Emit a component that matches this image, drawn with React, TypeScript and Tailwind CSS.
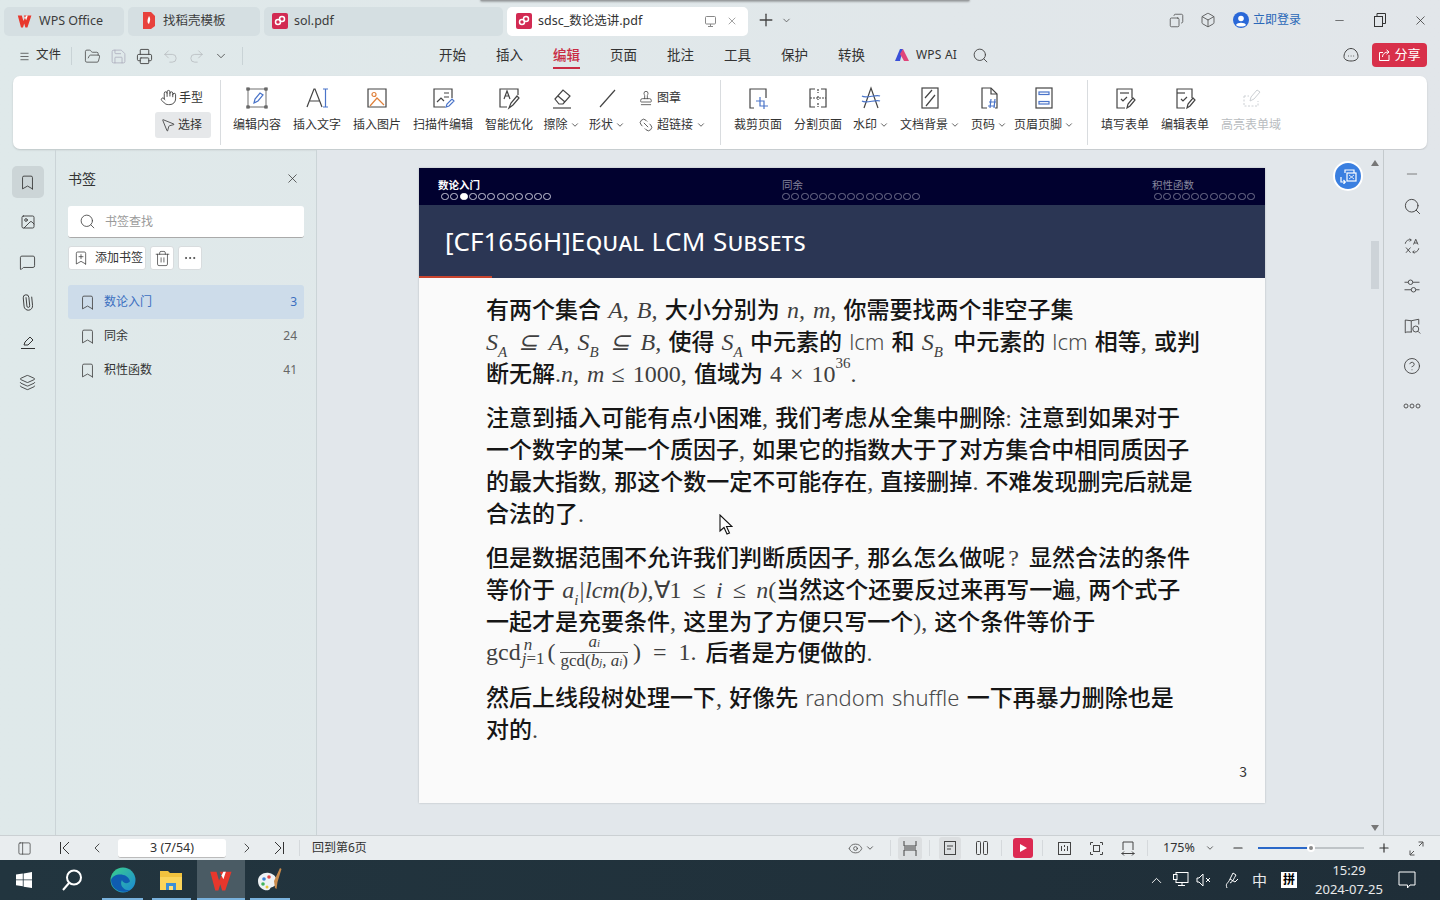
import React from "react";
import { ChevronDown, ChevronLeft, ChevronRight, ChevronUp, X, Plus, Minus, Search, Undo2, Redo2, Printer, FolderOpen, Save, Bookmark, MessageSquare, Paperclip, Layers, Ellipsis, Trash2, BookmarkPlus, Eye, CircleHelp, Hand, MousePointer2, Link2, Stamp, Box, Copy, PanelLeft, Menu, Image as ImageIcon } from "lucide-react";

const CJK = "font-['Noto_Sans','Noto_Sans_CJK_SC',sans-serif]";

function S({ s = 24, children, className = "" }: { s?: number; children: React.ReactNode; className?: string }) {
  return (
    <svg width={s} height={s} viewBox="0 0 24 24" fill="none" stroke="#444" strokeWidth="1.2" className={className}>
      {children}
    </svg>
  );
}

const Caret = () => <ChevronDown size={10} strokeWidth={2.2} color="#555" />;

function WpsLogo({ s = 16 }: { s?: number }) {
  return (
    <svg width={s} height={s} viewBox="0 0 20 20">
      <path d="M1 3h5l2 7 2-4-1.500-3h9.500l-5 15h-2.500l-1.500-5-1.500 5h-2.500z" fill="#e8372c" />
      <path d="M10 6l1.500-3h2l-2 6z" fill="#fff" />
    </svg>
  );
}

function PdfIcon() {
  return (
    <svg width="16" height="16" viewBox="0 0 16 16">
      <rect x="0" y="0" width="16" height="16" rx="2" fill="#d22a52" />
      <circle cx="6" cy="9" r="2.500" fill="none" stroke="#fff" strokeWidth="1.500" />
      <circle cx="10" cy="6" r="2.500" fill="none" stroke="#fff" strokeWidth="1.500" />
    </svg>
  );
}

function Tab({ w, pl, icon, label, active, children }: { w: string; pl: string; icon: React.ReactNode; label: string; active?: boolean; children?: React.ReactNode }) {
  return (
    <div className={`${w} ${pl} h-[29px] rounded-[5px] flex items-center pb-[1px] text-[12.500px] ${active ? "bg-white text-[#333]" : "bg-[#d5dfe2] text-[#3c3c3c]"}`}>
      <div className="w-[16px] mr-[6px] flex justify-center">{icon}</div>
      <span className="whitespace-nowrap">{label}</span>
      {children}
    </div>
  );
}

function TopBar() {
  return (
    <div className="h-[40px] flex items-start pt-[7px] pl-[4px] gap-[4px] shrink-0">
      <Tab w="w-[120px]" pl="pl-[13px]" icon={<WpsLogo />} label="WPS Office" />
      <Tab w="w-[132px]" pl="pl-[13px]" icon={
        <svg width="14" height="18" viewBox="0 0 14 18"><path d="M1 0h8l4 4v10l-4 3H1z" fill="#e8413c" /><path d="M7 4c2 3 1 5 0 8-2-1-2-4 0-8z" fill="#fff" /></svg>
      } label="找稻壳模板" />
      <Tab w="w-[239px]" pl="pl-[8px]" icon={<PdfIcon />} label="sol.pdf" />
      <Tab w="w-[241px]" pl="pl-[9px]" icon={<PdfIcon />} label="sdsc_数论选讲.pdf" active>
        <div className="ml-auto flex items-center gap-[9px] pr-[10px]">
          <svg width="13" height="13" viewBox="0 0 13 13" fill="none" stroke="#888"><rect x="1.500" y="1.500" width="10" height="7.500" rx="1" /><path d="M4 11.500h5M6.500 9v2" /></svg>
          <X size={12} strokeWidth={1.2} color="#666" />
        </div>
      </Tab>
      <div className="flex items-center h-[26px] ml-[4px] gap-[3px]">
        <Plus size={20} strokeWidth={1.6} color="#444" />
        <ChevronDown size={11} strokeWidth={1.8} color="#555" className="ml-[2px]" />
      </div>
      <div className="ml-auto h-[26px] flex items-center pr-[12px]">
        <Copy size={15} strokeWidth={1.2} color="#444" className="mr-[16px] -scale-x-100" />
        <Box size={16} strokeWidth={1.2} color="#444" className="mr-[17px]" />
        <svg width="16" height="16" viewBox="0 0 16 16" className="mr-[4px]">
          <circle cx="8" cy="8" r="8" fill="#2a68d8" />
          <circle cx="8" cy="6.500" r="2.800" fill="#fff" />
          <path d="M3 13c1-3 9-3 10 0-2 2-8 2-10 0z" fill="#fff" />
        </svg>
        <span className="text-[12px] text-[#2a68b8] w-[48px] mr-[32px] whitespace-nowrap">立即登录</span>
        <Minus size={13} strokeWidth={1.2} color="#333" className="mr-[28px]" />
        <svg width="12" height="14" viewBox="0 0 12 14" fill="none" stroke="#333" className="mr-[27px]"><rect x="0.500" y="3.500" width="8" height="10" /><path d="M3 3V0.500h8.500v10H9" /></svg>
        <X size={15} strokeWidth={1.2} color="#333" />
      </div>
    </div>
  );
}

const MENU = ["开始", "插入", "编辑", "页面", "批注", "工具", "保护", "转换"];

function MenuBar() {
  return (
    <div className="h-[32px] flex items-center shrink-0 relative text-[13.500px] text-[#333]">
      <div className="w-[72px] flex items-center pl-[19px] border-r border-[#c9d3d6] h-[18px]">
        <Menu size={11} strokeWidth={1.5} color="#333" className="mr-[6px]" />
        <span className="text-[12.500px] pb-[1px]">文件</span>
      </div>
      <div className="flex items-center ml-[12px] gap-[9px] w-[159px] h-[18px] border-r border-[#c9d3d6]">
        <FolderOpen size={17} strokeWidth={1.1} color="#444" />
        <Save size={17} strokeWidth={1.1} color="#aab" />
        <Printer size={17} strokeWidth={1.3} color="#444" />
        <Undo2 size={17} strokeWidth={1.1} color="#b5b9bd" />
        <Redo2 size={17} strokeWidth={1.1} color="#b5b9bd" />
        <ChevronDown size={14} strokeWidth={1.4} color="#444" />
      </div>
      <div className="flex items-center ml-[196px] gap-[30px] h-full">
        {MENU.map((m) => (
          <div key={m} className={`relative h-full flex items-center pb-[2px] ${m === "编辑" ? "text-[#c92c44] font-medium" : ""}`}>
            {m}
            {m === "编辑" && <div className="absolute left-0 right-0 bottom-[3px] h-[2px] bg-[#c92c44]" />}
          </div>
        ))}
      </div>
      <svg width="14" height="12" viewBox="0 0 14 12" className="ml-[30px] mr-[7px] mb-[2px]">
        <path d="M0 12L5 0h3L5 12z" fill="#3a50d8" />
        <path d="M5 5l3-5 6 12H9z" fill="#e0457a" />
      </svg>
      <span className="text-[12px] w-[42px] whitespace-nowrap tracking-[0.2px] pb-[2px]">WPS AI</span>
      <Search size={17} strokeWidth={1.3} color="#444" className="ml-[14px] mb-[2px]" />
      <div className="ml-auto flex items-center pr-[13px] pb-[2px]">
        <svg width="18" height="18" viewBox="0 0 18 18" fill="none" stroke="#444" className="mr-[12px]">
          <path d="M9 2.500c4 0 7 4 7 8 0 3-3 4.500-7 4.500s-7-1.500-7-4.500c0-4 3-8 7-8z" />
          <path d="M6 10h.8M8.700 10h.8M11.300 10h.8" />
        </svg>
        <div className="w-[55px] h-[24px] rounded-[4px] bg-[#d8304a] flex items-center justify-center text-white text-[13px] gap-[3px]">
          <svg width="13" height="13" viewBox="0 0 13 13" fill="none" stroke="#fff"><path d="M11 6v5.500H1.500V3.500H5" /><path d="M4.500 8c0-3 2.500-5 6-5M8.500 0.800l2.500 2.200-2.500 2.200" /></svg>
          分享
        </div>
      </div>
    </div>
  );
}

function RI({ w = "w-[48px]", icon, label, caret, dim }: { w?: string; icon: React.ReactNode; label: string; caret?: boolean; dim?: boolean }) {
  return (
    <div className={`${w} flex flex-col items-center shrink-0`}>
      <div className="h-[28px] flex items-center justify-center">{icon}</div>
      <div className={`mt-[4px] h-[18px] flex items-center whitespace-nowrap text-[12px] gap-[2px] ${dim ? "text-[#b8bcc0]" : "text-[#333]"}`}>
        {label}
        {caret && <Caret />}
      </div>
    </div>
  );
}

const blue = "#4a74c9";

function Ribbon() {
  return (
    <div className="mx-[13px] h-[73px] mt-[4px] w-[1414px] bg-white rounded-[7px] flex pt-[8px] pl-[142px] shrink-0 shadow-[0_1px_2px_rgba(0,0,0,0.15)]">
      <div className="w-[65px] flex flex-col text-[12px] text-[#333]">
        <div className="h-[27px] flex items-center pl-[5px] gap-[2px]">
          <Hand size={17} strokeWidth={1.2} color="#333" />手型
        </div>
        <div className="mt-[1px] w-[56px] h-[26px] rounded-[3px] bg-[#e6e8ea] flex items-center pl-[5px] gap-[2px]">
          <MousePointer2 size={16} strokeWidth={1.2} color="#333" />选择
        </div>
      </div>
      <div className="w-px h-[65px] -mt-[4px] bg-[#d9dcdf] mr-[12px]" />
      <div className="flex gap-[12px]">
        <RI label="编辑内容" icon={<S><rect x="3" y="3" width="18" height="18" stroke="#888" /><path d="M9 17l1-4 5-6 3 2-5 6z" stroke={blue} /><path d="M2 2h2v2H2zM20 2h2v2h-2zM2 20h2v2H2zM20 20h2v2h-2z" fill="#fff" /></S>} />
        <RI label="插入文字" icon={<S><path d="M2 21L9 3h1l7 18M5 15h10" /><path d="M18 3h5M20.500 3v18M18 21h5" stroke={blue} /></S>} />
        <RI label="插入图片" icon={<S><path d="M3 3h18v18H3z" /><circle cx="9" cy="8.500" r="2" stroke="#e0803a" /><path d="M5 20l7-8 7 7" stroke="#e0803a" /></S>} />
        <RI w="w-[60px]" label="扫描件编辑" icon={<S><path d="M21 12V3H3v18h11" /><path d="M13 7h5M13 11h5" /><path d="M6 16l4-4 3 3" /><path d="M15 21l1-3 5-5 2 2-5 5z" stroke={blue} /></S>} />
        <RI label="智能优化" icon={<S><path d="M21 9V3H3v18h7" /><path d="M7 13l3-8 3 8M8 10h4" /><path d="M12 22l2-5 6-7 2 2-6 7z" /></S>} />
        <RI w="w-[33px]" label="擦除" caret icon={<S><path d="M5 13l8-9 7 6-7 8H9z" /><path d="M8 10l7 6" /><path d="M3 22h18" /></S>} />
        <RI w="w-[34px]" label="形状" caret icon={<S><path d="M5 21L20 4" /></S>} />
        <div className="w-[68px] flex flex-col text-[12px] text-[#333] shrink-0 ml-[2px]">
          <div className="h-[28px] flex items-center gap-[3px]"><Stamp size={16} strokeWidth={1.2} color="#444" />图章</div>
          <div className="mt-[4px] h-[18px] flex items-center gap-[3px] whitespace-nowrap"><Link2 size={16} strokeWidth={1.2} color="#444" className="rotate-45" />超链接<Caret /></div>
        </div>
      </div>
      <div className="w-px h-[65px] -mt-[4px] bg-[#d9dcdf] ml-[14px] mr-[13px]" />
      <div className="flex gap-[12px]">
        <RI label="裁剪页面" icon={<S><path d="M8 22H4V3h16v9" /><path d="M14 11v9h8M10 15h8v8" stroke={blue} /></S>} />
        <RI label="分割页面" icon={<S><path d="M9 3H4v18h5M15 3h5v18h-5" /><path d="M4 12h16M12 3v4M12 10v4M12 17v4" strokeDasharray="2 1" /></S>} />
        <RI w="w-[34px]" label="水印" caret icon={<S><path d="M5 22l7-20 7 20" /><path d="M3 10c4 3 14-2 18 0M3 15c4 3 14-2 18 0" stroke={blue} /></S>} />
        <RI w="w-[60px]" label="文档背景" caret icon={<S><rect x="4" y="2" width="16" height="20" /><path d="M7 12l7-8M8 20l9-11" /></S>} />
        <RI w="w-[34px]" label="页码" caret icon={<S><path d="M10 22H5V2h9l6 6v14h-2" /><path d="M14 2v6h6" /><path d="M12 16h7M11 20h7M14 13l-1 9M18 13l-1 9" stroke={blue} /></S>} />
        <RI w="w-[52px]" label="页眉页脚" caret icon={<S><rect x="4" y="2" width="16" height="20" /><rect x="7" y="6" width="10" height="2.500" stroke={blue} /><rect x="7" y="15.500" width="10" height="2.500" stroke={blue} /></S>} />
      </div>
      <div className="w-px h-[65px] -mt-[4px] bg-[#d9dcdf] ml-[17px] mr-[13px]" />
      <div className="flex gap-[12px]">
        <RI label="填写表单" icon={<S><path d="M12 22H4V3h15v9" /><path d="M7 7h9" /><path d="M8 13l2 2 4-4" /><path d="M14 22l1-4 5-6 2 2-5 6z" /></S>} />
        <RI label="编辑表单" icon={<S><path d="M12 22H4V3h15v9" /><path d="M4 7h8" /><path d="M8 13l2 2 4-4" /><path d="M14 22l1-4 5-6 2 2-5 6z" /></S>} />
        <RI w="w-[60px]" dim label="高亮表单域" icon={<svg width="24" height="24" viewBox="0 0 24 24" fill="none" stroke="#ccd0d4"><path d="M5 10h5M5 10v10h14v-5" strokeDasharray="2 1.500" /><path d="M11 15l1-4 6-7 3 2-6 7z" /></svg>} />
      </div>
    </div>
  );
}

function LeftRail() {
  const icons = [
    <Bookmark key="a" size={17} strokeWidth={1.2} color="#333" />,
    <ImageIcon key="b" size={16} strokeWidth={1.3} color="#333" />,
    <MessageSquare key="c" size={17} strokeWidth={1.2} color="#333" />,
    <Paperclip key="d" size={17} strokeWidth={1.2} color="#333" className="rotate-[-50deg]" />,
    <svg key="e" width="16" height="16" viewBox="0 0 16 16" fill="none" stroke="#333"><path d="M4 11l1-3 5-5 3 3-5 5zM1 14.500h14" /></svg>,
    <Layers key="f" size={17} strokeWidth={1.2} color="#333" />,
  ];
  return (
    <div className="w-[56px] shrink-0 border-r border-[#cbd4d7] flex flex-col items-center pt-[16px] gap-[8px]">
      {icons.map((ic, i) => (
        <div key={i} className={`w-[32px] h-[32px] rounded-[5px] flex items-center justify-center ${i === 0 ? "bg-[#ccd5d7]" : ""}`}>{ic}</div>
      ))}
    </div>
  );
}

function BmRow({ label, n, active }: { label: string; n: number; active?: boolean }) {
  return (
    <div className={`h-[34px] rounded-[3px] flex items-center pl-[11px] pr-[7px] text-[12px] ${active ? "bg-[#cddcea] text-[#3b6fc0]" : "text-[#333]"}`}>
      <Bookmark size={17} strokeWidth={1.2} color="#444" className="mr-[8px]" />
      <span className="whitespace-nowrap">{label}</span>
      <span className={`ml-auto text-[12px] ${active ? "text-[#3b6fc0]" : "text-[#666]"}`}>{n}</span>
    </div>
  );
}

function BookmarkPanel() {
  return (
    <div className="w-[261px] shrink-0 border-r border-[#cbd4d7] pl-[12px] pr-[12px]">
      <div className="h-[56px] flex items-center justify-between pr-[4px] pt-[1px] text-[14px] text-[#333]">
        书签
        <X size={15} strokeWidth={1.2} color="#333" />
      </div>
      <div className="h-[32px] bg-white rounded-[3px] border-b border-[#aaa] flex items-center pl-[11px] text-[12px] text-[#9a9a9a] gap-[9px]">
        <Search size={17} strokeWidth={1.2} color="#444" />书签查找
      </div>
      <div className="flex gap-[4px] mt-[8px] text-[12px] text-[#333]">
        <div className="w-[78px] h-[24px] bg-white rounded-[3px] border border-[#d8dcde] flex items-center pl-[4px] gap-[6px] whitespace-nowrap">
          <BookmarkPlus size={16} strokeWidth={1.1} color="#333" />添加书签
        </div>
        <div className="w-[24px] h-[24px] bg-white rounded-[3px] border border-[#d8dcde] flex items-center justify-center"><Trash2 size={17} strokeWidth={1} color="#333" /></div>
        <div className="w-[24px] h-[24px] bg-white rounded-[3px] border border-[#d8dcde] flex items-center justify-center"><Ellipsis size={14} strokeWidth={1.4} color="#333" /></div>
      </div>
      <div className="mt-[15px]">
        <BmRow label="数论入门" n={3} active />
        <BmRow label="同余" n={24} />
        <BmRow label="积性函数" n={41} />
      </div>
    </div>
  );
}

function Dots({ n, on }: { n: number; on?: number }) {
  return (
    <div className="flex gap-[1.300px] mt-[2px]">
      {Array.from({ length: n }).map((_, i) => (
        <div key={i} className={`w-[8px] h-[7px] rounded-full border ${i === on ? "bg-white border-white" : on !== undefined ? "border-[#c8c8d8]" : "border-[#70708c]"}`} />
      ))}
    </div>
  );
}

const mathBase = "font-['Liberation_Serif',serif] font-normal text-[#3f3f3f] text-[24px]";
const M = ({ children, className = "" }: { children: React.ReactNode; className?: string }) => <span className={`${mathBase} italic ${className}`}>{children}</span>;
const R = ({ children, className = "" }: { children: React.ReactNode; className?: string }) => <span className={`${mathBase} ${className}`}>{children}</span>;
const L = ({ children }: { children: React.ReactNode }) => (
  <span className="font-['Noto_Sans',sans-serif] font-light text-[#4a4a4a] text-[22px]">{children}</span>
);
const Sub = ({ children }: { children: React.ReactNode }) => <sub className="text-[15px] align-[-3px] leading-none">{children}</sub>;
const Op = ({ children }: { children: React.ReactNode }) => <span className="mx-[3px]">{children}</span>;

function Line({ children }: { children: React.ReactNode }) {
  return <div className="h-[32px] leading-[32px] whitespace-nowrap [word-spacing:2px]">{children}</div>;
}

function PdfPage() {
  return (
    <div className="w-[846px] h-[635px] bg-[#fafafa] shrink-0 flex flex-col shadow-[0_0_2px_rgba(0,0,0,0.2)] text-[#161616]">
      <div className="h-[37px] bg-[#01012f] flex shrink-0 text-[10.500px] leading-[12px] pt-[11px]">
        <div className="w-[363px] pl-[19px]">
          <div className="font-bold text-white">数论入门</div>
          <div className="ml-[3px]"><Dots n={12} on={2} /></div>
        </div>
        <div className="w-[370px] text-[#85859c]">
          <div>同余</div>
          <Dots n={15} />
        </div>
        <div className="text-[#85859c] whitespace-nowrap">
          <div>积性函数</div>
          <div className="ml-[2px]"><Dots n={11} /></div>
        </div>
      </div>
      <div className="h-[73px] bg-[#2b3654] flex flex-col shrink-0">
        <div className="flex-1 flex items-center pl-[26px] text-white text-[26px] font-['Noto_Sans',sans-serif] pt-[1px] whitespace-nowrap">
          [CF1656H]<span className="[font-variant-caps:small-caps] tracking-[0.4px]">Equal LCM Subsets</span>
        </div>
        <div className="h-[2px] w-[73px] bg-[#c9442e]" />
      </div>
      <div className="pl-[67px] pt-[14px] flex-1 text-[23px] font-medium font-['Noto_Sans_CJK_SC','Noto_Sans',sans-serif]">
        <Line>有两个集合 <M>A, B,</M> 大小分别为 <M>n, m,</M> 你需要找两个非空子集</Line>
        <Line><M>S<Sub>A</Sub> <Op>⊆</Op> A, S<Sub>B</Sub> <Op>⊆</Op> B,</M> 使得 <M>S<Sub>A</Sub></M> 中元素的 <L>lcm</L> 和 <M className="mr-[3px]">S<Sub>B</Sub></M> 中元素的 <L>lcm</L> 相等<R>,</R> 或判</Line>
        <Line>断无解<R>.</R><M>n, m</M> <R>≤ 1000,</R> 值域为 <R>4 × 10<sup className="text-[15px] align-[7px] leading-none">36</sup>.</R></Line>
        <div className="h-[12px]" />
        <Line>注意到插入可能有点小困难<R>,</R> 我们考虑从全集中删除<R>:</R> 注意到如果对于</Line>
        <Line>一个数字的某一个质因子<R>,</R> 如果它的指数大于了对方集合中相同质因子</Line>
        <Line>的最大指数<R>,</R> 那这个数一定不可能存在<R>,</R> 直接删掉<R>.</R> 不难发现删完后就是</Line>
        <Line>合法的了<R>.</R></Line>
        <div className="h-[12px]" />
        <Line>但是数据范围不允许我们判断质因子<R>,</R> 那么怎么做呢<R className="mx-[3px]">?</R> 显然合法的条件</Line>
        <Line>等价于 <M>a<Sub>i</Sub>|lcm(b),</M><R>∀1 <Op>≤</Op></R> <M>i</M> <R><Op>≤</Op></R> <M>n</M><R>(</R>当然这个还要反过来再写一遍<R>,</R> 两个式子</Line>
        <Line>一起才是充要条件<R>,</R> 这里为了方便只写一个<R>),</R> 这个条件等价于</Line>
        <div className="h-[32px] flex items-center whitespace-nowrap">
          <R>gcd</R>
          <span className="inline-flex flex-col font-['Liberation_Serif',serif] font-normal text-[17px] leading-[14px] text-[#3f3f3f] ml-[1px] mr-[3px]">
            <i className="pl-[2px]">n</i>
            <span><i>j</i>=1</span>
          </span>
          <R>(</R>
          <span className="inline-flex flex-col items-center font-['Liberation_Serif',serif] font-normal text-[17px] leading-[15px] text-[#3f3f3f] mx-[5px]">
            <i className="border-b border-[#555] w-full text-center pb-[1px]">a<span className="text-[11px]">i</span></i>
            <span>gcd(<i>b<span className="text-[11px]">j</span>, a<span className="text-[11px]">i</span></i>)</span>
          </span>
          <R>)&nbsp;&nbsp;=&nbsp;&nbsp;1.</R>
          <span className="ml-[9px]">后者是方便做的<R>.</R></span>
        </div>
        <div className="h-[12px]" />
        <Line>然后上线段树处理一下<R>,</R> 好像先 <L>random shuffle</L> 一下再暴力删除也是</Line>
        <Line>对的<R>.</R></Line>
        <div className="flex justify-end pr-[18px] pt-[17px] text-[14px] font-normal text-[#333]">3</div>
      </div>
    </div>
  );
}

function Canvas() {
  return (
    <div className="flex-1 bg-[#e2e7eb] flex relative">
      <div className="flex-1 pl-[102px] pt-[18px]">
        <PdfPage />
      </div>
      <div className="w-[16px] shrink-0 flex flex-col items-center">
        <div className="h-[9px]" />
        <svg width="8" height="6" viewBox="0 0 8 6" className="mt-[1px]"><path d="M4 0l4 6H0z" fill="#777" /></svg>
        <div className="w-[8px] h-[48px] bg-[#cdd3d8] mt-[75px]" />
        <div className="flex-1" />
        <svg width="8" height="6" viewBox="0 0 8 6" className="mb-[4px]"><path d="M4 6l4-6H0z" fill="#777" /></svg>
      </div>
      <div className="absolute left-[1016px] top-[11px] w-[30px] h-[30px] rounded-full bg-[#3a7fe0] border-2 border-white flex items-center justify-center">
        <svg width="17" height="15" viewBox="0 0 17 15" fill="none" stroke="#fff" strokeWidth="1.200"><path d="M5 4V1h9v3" /><rect x="7" y="4" width="9" height="8" /><path d="M9 6l5 4M14 6l-5 4" strokeWidth="0.800" /><path d="M1 8v5h4M3.500 11l1.800 2-1.800 2" /></svg>
      </div>
      <svg width="14" height="22" viewBox="0 0 14 22" className="absolute left-[402px] top-[364px]">
        <path d="M1 1v16l4-3.500 3 6.500 2.500-1-3-6.500h5.500z" fill="#fff" stroke="#111" strokeWidth="1.100" />
      </svg>
    </div>
  );
}

function RightRail() {
  const items = [
    <div key="a" className="h-[24px] flex items-center"><Minus size={16} strokeWidth={1.4} color="#777" /></div>,
    <div key="b" className="h-[40px] flex items-center"><Search size={19} strokeWidth={1.2} color="#444" /></div>,
    <div key="c" className="h-[40px] flex items-center">
      <S s={18}><path d="M3 9a6 6 0 0 1 8-5M9 2l2 2-2 2M21 15a6 6 0 0 1-8 5M15 22l-2-2 2-2" /><path d="M14 10l3-7 3 7M15 8h4M4 14l6 7M10 14l-6 7" /></S>
    </div>,
    <div key="d" className="h-[40px] flex items-center">
      <S s={18}><path d="M2 7h5M13 7h9M2 17h9M17 17h5" /><circle cx="10" cy="7" r="3" /><circle cx="14" cy="17" r="3" /></S>
    </div>,
    <div key="e" className="h-[40px] flex items-center">
      <S s={18}><path d="M12 20H5l-2 1V4l8 1 10-2v7" /><path d="M11 5v15" /><circle cx="17" cy="16" r="4" /><path d="M20 19l3 3" /></S>
    </div>,
    <div key="f" className="h-[40px] flex items-center"><CircleHelp size={18} strokeWidth={1.2} color="#444" /></div>,
    <div key="g" className="h-[40px] flex items-center">
      <svg width="18" height="6" viewBox="0 0 18 6" fill="none" stroke="#555" strokeWidth="1"><circle cx="3" cy="3" r="2" /><circle cx="9" cy="3" r="2" /><circle cx="15" cy="3" r="2" /></svg>
    </div>,
  ];
  return (
    <div className="w-[57px] shrink-0 bg-[#e2e7eb] border-l border-[#c4cacd] flex flex-col items-center pt-[12px]">{items}</div>
  );
}

const Div = ({ ml = 0 }: { ml?: number }) => <div className="w-px h-[16px] bg-[#d5d9dc]" style={{ marginLeft: ml }} />;

function Slot({ w, children, bg }: { w: number; children?: React.ReactNode; bg?: boolean }) {
  return (
    <div className={`h-[23px] flex items-center justify-center shrink-0 rounded-[3px] ${bg ? "bg-[#dcdfe1]" : ""}`} style={{ width: w }}>
      {children}
    </div>
  );
}

function StatusBar() {
  return (
    <div className="h-[25px] shrink-0 bg-[#e9edef] border-t border-[#cbd0d3] flex items-center text-[12px] text-[#333]">
      <Slot w={48}><PanelLeft size={15} strokeWidth={1.1} color="#333" /></Slot>
      <Slot w={34}>
        <svg width="12" height="14" viewBox="0 0 12 14" fill="none" stroke="#333"><path d="M1.500 1v12M10 1L4 7l6 6" /></svg>
      </Slot>
      <Slot w={30}><ChevronLeft size={16} strokeWidth={1.3} color="#333" /></Slot>
      <div className="w-[108px] h-[19px] ml-[6px] bg-white rounded-[3px] border-b border-[#bbb] flex items-center justify-center text-[12.500px] pt-[1px] shrink-0">3 (7/54)</div>
      <Slot w={42}><ChevronRight size={16} strokeWidth={1.3} color="#333" /></Slot>
      <Slot w={22}>
        <svg width="12" height="14" viewBox="0 0 12 14" fill="none" stroke="#333"><path d="M10.500 1v12M2 1l6 6-6 6" /></svg>
      </Slot>
      <Div ml={9} />
      <span className="ml-[12px] whitespace-nowrap">回到第6页</span>
      <div className="ml-auto flex items-center">
        <Eye size={15} strokeWidth={1.2} color="#444" />
        <div className="ml-[2px]"><Caret /></div>
        <Div ml={15} />
        <div className="ml-[7px]"><Slot w={24} bg><svg width="14" height="15" viewBox="0 0 14 15" fill="none" stroke="#444"><path d="M1 0v5h12V0M1 15V9h12v6M1 7h12" /></svg></Slot></div>
        <Div ml={7} />
        <div className="ml-[9px]"><Slot w={22} bg><svg width="12" height="14" viewBox="0 0 12 14" fill="none" stroke="#444"><rect x="0.500" y="0.500" width="11" height="13" /><path d="M3 5h6M3 8h4" /></svg></Slot></div>
        <div className="ml-[10px]"><Slot w={22}><svg width="12" height="14" viewBox="0 0 12 14" fill="none" stroke="#444"><rect x="0.500" y="0.500" width="4" height="13" rx="1" /><rect x="7.500" y="0.500" width="4" height="13" rx="1" /></svg></Slot></div>
        <Div ml={8} />
        <div className="ml-[11px] w-[20px] h-[20px] rounded-[3px] bg-[#dc2a52] flex items-center justify-center"><svg width="7" height="8" viewBox="0 0 7 8"><path d="M0 0l7 4-7 4z" fill="#fff" /></svg></div>
        <Div ml={9} />
        <div className="ml-[10px]"><Slot w={22}><svg width="13" height="13" viewBox="0 0 13 13" fill="none" stroke="#444"><rect x="0.500" y="0.500" width="12" height="12" /><path d="M6.500 3v2M6.500 7v2M3.500 4v5M9.500 4v5" /></svg></Slot></div>
        <div className="ml-[10px]"><Slot w={22}><svg width="13" height="13" viewBox="0 0 13 13" fill="none" stroke="#444"><path d="M0.500 3V0.500H3M10 0.500h2.500V3M12.500 10v2.500H10M3 12.500H0.500V10" /><rect x="3.500" y="3.500" width="6" height="6" /></svg></Slot></div>
        <div className="ml-[10px]"><Slot w={22}><svg width="14" height="15" viewBox="0 0 14 15" fill="none" stroke="#444"><path d="M2 9V1h10v8M0.500 12.500h13M3 10.500l-2 2 2 2M11 10.500l2 2-2 2" /></svg></Slot></div>
        <Div ml={8} />
        <span className="ml-[15px] w-[32px] text-[12.500px]">175%</span>
        <div className="ml-[10px]"><Caret /></div>
        <Minus size={14} strokeWidth={2} color="#333" className="ml-[16px]" />
        <div className="ml-[13px] w-[106px] h-[2px] bg-[#bfc4c7] relative">
          <div className="h-full w-[53px] bg-[#2a68c8]" />
          <div className="absolute left-[49px] -top-[3px] w-[8px] h-[8px] rounded-full bg-[#888] border-2 border-white" />
        </div>
        <Plus size={14} strokeWidth={2} color="#333" className="ml-[13px]" />
        <svg width="15" height="15" viewBox="0 0 15 15" fill="none" stroke="#555" className="ml-[18px] mr-[16px]"><path d="M9.500 1H14v4.500M14 1L10 5M5.500 14H1V9.500M1 14l4-4" /></svg>
      </div>
    </div>
  );
}

function Taskbar() {
  return (
    <div className="h-[40px] shrink-0 bg-gradient-to-r from-[#22353f] to-[#1f2e38] flex items-center text-white">
      <div className="w-[48px] flex justify-center">
        <svg width="16" height="16" viewBox="0 0 16 16" fill="#fff"><path d="M0 2.500l6.800-1v6H0zM7.600 1.400L16 0v7.500H7.600zM0 8.300h6.800v6l-6.800-1zM7.600 8.300H16V16l-8.400-1.300z" /></svg>
      </div>
      <div className="w-[48px] flex justify-center">
        <svg width="24" height="24" viewBox="0 0 24 24" fill="none" stroke="#fff" strokeWidth="2"><circle cx="14" cy="9.500" r="7" /><path d="M9 15l-6 7" /></svg>
      </div>
      <div className="w-[54px] h-full flex justify-center items-center relative">
        <svg width="26" height="26" viewBox="0 0 26 26">
          <defs>
            <linearGradient id="e1" x1="0" y1="0" x2="1" y2="1"><stop offset="0" stopColor="#3bd18a" /><stop offset="1" stopColor="#1a86d8" /></linearGradient>
          </defs>
          <circle cx="13" cy="13" r="12.500" fill="url(#e1)" />
          <path d="M1 13C3 6 17 5 20 14c-1 3-7 3-8-1-3 5 2 11 8 10-8 5-19-1-19-10z" fill="#0f5cb0" />
        </svg>
        <div className="absolute bottom-0 left-[6px] w-[41px] h-[2px] bg-[#79b2dd]" />
      </div>
      <div className="w-[42px] h-full flex justify-center items-center relative">
        <svg width="22" height="22" viewBox="0 0 22 22">
          <path d="M0 2h8l2 2h12v17H0z" fill="#f2c33e" />
          <path d="M0 8h22v13H0z" fill="#fbd55b" />
          <rect x="6" y="14" width="10" height="7" fill="#3c8fd6" />
          <rect x="9" y="17" width="4" height="4" fill="#ffe07a" />
        </svg>
        <div className="absolute bottom-0 left-[2px] w-[39px] h-[2px] bg-[#79b2dd]" />
      </div>
      <div className="w-[48px] h-full ml-[5px] bg-[#4a5b64] flex justify-center items-center relative">
        <WpsLogo s={25} />
        <div className="absolute bottom-0 left-0 right-0 h-[2px] bg-[#79b2dd]" />
      </div>
      <div className="w-[48px] h-full flex justify-center items-center relative">
        <svg width="28" height="28" viewBox="0 0 28 28">
          <path d="M3 15c0-6 6-9 11-8 6 1 9 6 7 11-2 4-5 2-6 5-2 3-12 1-12-8z" fill="#eef2f4" />
          <circle cx="9" cy="13" r="1.800" fill="#3b82d6" /><circle cx="14" cy="11" r="1.800" fill="#e04646" />
          <circle cx="8" cy="18" r="1.800" fill="#42b45a" /><circle cx="12" cy="21" r="1.500" fill="#e9c63a" />
          <path d="M19 15L25 2l1.500 1-4 13-1 7-1.500-1z" fill="#c98a4a" />
        </svg>
        <div className="absolute bottom-0 left-[5px] w-[40px] h-[2px] bg-[#79b2dd]" />
      </div>
      <div className="ml-auto flex items-center text-white/90">
        <ChevronUp size={17} strokeWidth={1.3} color="#fff" />
        <svg width="16" height="17" viewBox="0 0 16 17" fill="none" stroke="#fff" className="ml-[8px]"><rect x="3" y="0.500" width="12" height="10" /><rect x="0.500" y="2.500" width="3.500" height="5" fill="#22353f" /><path d="M5 13.500h7M9 10.500v3" /></svg>
        <svg width="16" height="14" viewBox="0 0 16 14" fill="none" stroke="#fff" className="ml-[7px]"><path d="M1 5h2l4-4v12l-4-4H1zM10 5l4 4M14 5l-4 4" /></svg>
        <svg width="16" height="18" viewBox="0 0 16 18" fill="none" stroke="#fff" className="ml-[12px]"><path d="M3 17c-2-5 1-4 3-9l3-6 3 2c-2 3-3 7-6 8M6 8l5 3 3-3" /></svg>
        <span className="ml-[12px] text-[15px] w-[16px] leading-[22px]">中</span>
        <div className="ml-[13px] w-[16px] h-[16px] bg-white text-black text-[12px] leading-[16px] text-center font-bold">拼</div>
        <div className="ml-[16px] w-[72px] flex flex-col items-center text-[13px] leading-[19px] font-['Noto_Sans',sans-serif]">
          <span>15:29</span>
          <span className="whitespace-nowrap">2024-07-25</span>
        </div>
        <svg width="18" height="18" viewBox="0 0 18 18" fill="none" stroke="#fff" className="ml-[13px] mr-[24px]"><path d="M1 1h16v13h-5l-2.500 3V14H1z" /></svg>
      </div>
    </div>
  );
}

export default function App() {
  return (
    <div className={`w-[1440px] h-[900px] overflow-hidden flex flex-col relative bg-gradient-to-r from-[#dfe9ea] to-[#e2e6ea] ${CJK}`}>
      <TopBar />
      <MenuBar />
      <Ribbon />
      <div className="flex-1 flex min-h-0 mt-[1px]">
        <LeftRail />
        <BookmarkPanel />
        <Canvas />
        <RightRail />
      </div>
      <StatusBar />
      <Taskbar />
      <div className="absolute left-[480px] -top-[1px] w-[490px] h-[2px] bg-[#9a9d9f] rounded-b-[3px] shadow-[0_1px_2px_rgba(0,0,0,0.3)]" />
    </div>
  );
}
